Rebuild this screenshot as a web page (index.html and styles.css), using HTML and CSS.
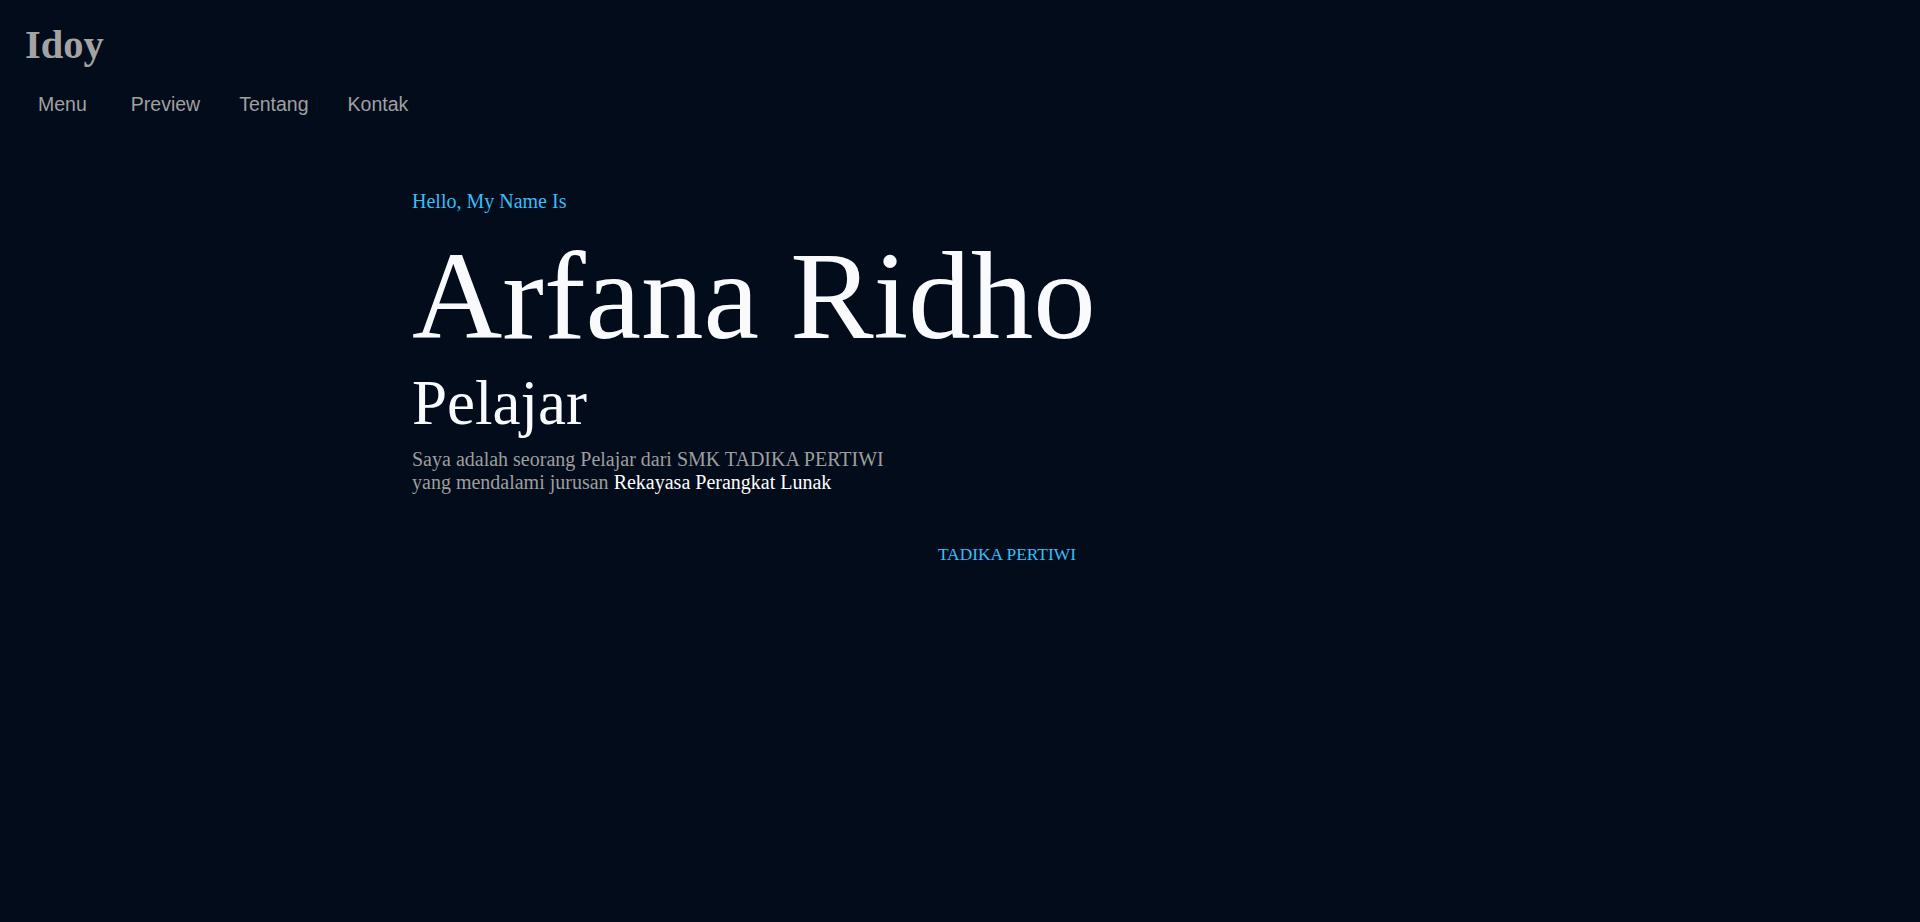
FILE: index.html
```html
<!DOCTYPE html>
<html lang="id">
<head>
<meta charset="utf-8">
<title>Idoy</title>
<link rel="stylesheet" href="styles.css">
</head>
<body>
<header class="site-header">
  <div class="brand">Idoy</div>
  <nav class="nav">
    <a class="nav-link nav-first" href="#">Menu</a>
    <a class="nav-link" href="#">Preview</a>
    <a class="nav-link" href="#">Tentang</a>
    <a class="nav-link" href="#">Kontak</a>
  </nav>
</header>
<main class="hero">
  <p class="greeting">Hello, My Name Is</p>
  <h1 class="name">Arfana Ridho</h1>
  <h2 class="role">Pelajar</h2>
  <p class="desc">Saya adalah seorang Pelajar dari SMK TADIKA PERTIWI<br>yang mendalami jurusan <span class="major">Rekayasa Perangkat Lunak</span></p>
  <div class="school-row"><span class="school">TADIKA PERTIWI</span></div>
</main>
</body>
</html>
```
FILE: styles.css
```css
html, body {
  margin: 0;
  padding: 0;
}
body {
  background: #020c1b;
  min-height: 922px;
  font-family: "Liberation Serif", "Times New Roman", serif;
}
.site-header {
  padding: 21px 0 0 25px;
}
.brand {
  font-family: "Liberation Serif", serif;
  font-weight: bold;
  font-size: 40.5px;
  color: #a3a3a3;
  line-height: normal;
}
.nav {
  display: flex;
  gap: 39px;
  margin-top: 25px;
  padding-left: 13px;
}
.nav-link {
  font-family: "Liberation Sans", Arial, sans-serif;
  font-size: 19.5px;
  color: #a0a0a0;
  text-decoration: none;
}
.nav-first {
  margin-right: 5px;
}
.hero {
  padding-left: 412px;
  padding-top: 74px;
}
.greeting {
  margin: 0;
  font-size: 20px;
  color: #38bdf8;
}
.name {
  margin: 12px 0 0;
  font-size: 125px;
  font-weight: normal;
  color: #f8fafc;
  line-height: normal;
}
.role {
  margin: -1px 0 0;
  font-size: 63px;
  font-weight: normal;
  color: #f8fafc;
  line-height: normal;
}
.desc {
  margin: 8px 0 0;
  font-size: 20px;
  color: #9e9e9e;
  line-height: 23px;
}
.major {
  color: #ffffff;
}
.school-row {
  margin-top: 50px;
  width: 664px;
  display: flex;
  justify-content: flex-end;
}
.school {
  font-size: 17.4px;
  color: #38bdf8;
}
```
